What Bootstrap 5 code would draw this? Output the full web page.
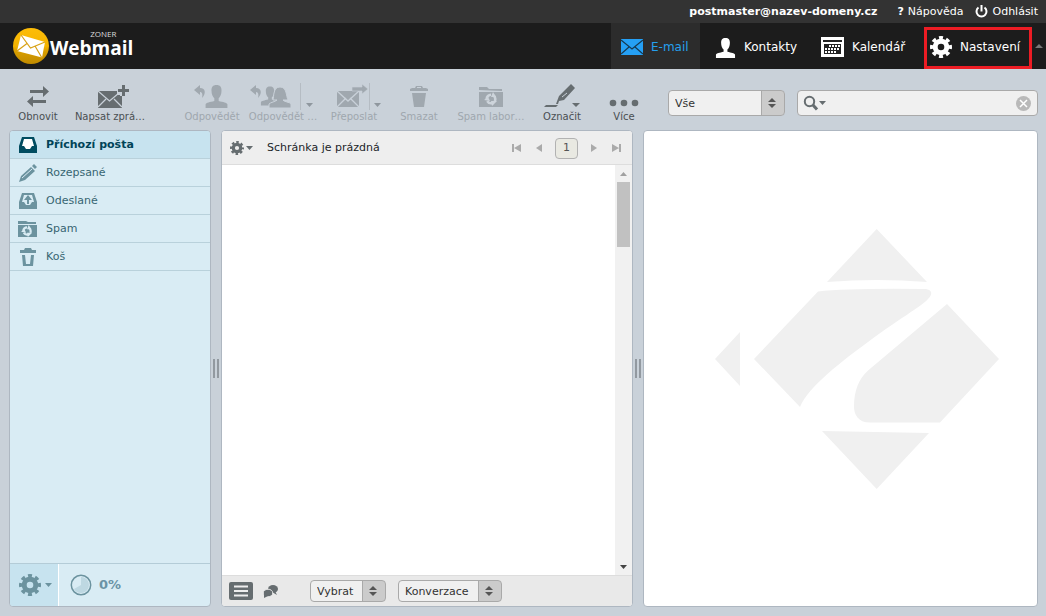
<!DOCTYPE html>
<html lang="cs">
<head>
<meta charset="utf-8">
<meta name="viewport" content="width=device-width, initial-scale=1">
<title>Zoner Webmail</title>
<link rel="stylesheet" href="https://cdn.jsdelivr.net/npm/bootstrap@5.3.0/dist/css/bootstrap.min.css">
<style>
body{font:11px/14px "DejaVu Sans",Verdana,sans-serif;background:#c9d1d9;color:#333}
button{font:inherit;color:inherit;background:none;border:0;padding:0}
a{text-decoration:none;color:#fff}
svg{display:block;flex:none}
.topline{height:23px;background:#333;color:#fff;padding-right:8px;gap:12px}
.mainbar{height:46px;background:#1c1c1c;padding-left:13px}
.brand-main{font:bold 19px/26px "Open Sans",sans-serif;color:#fff;padding-top:4px}
.brand-top{position:absolute;right:17px;top:2px;font:8px/10px "Open Sans",sans-serif;color:#ddd}
.apps a{font-size:12px;gap:8px;padding-top:2px}
.apps .app-mail{width:89px;padding-left:10px;background:#2c2c2c;color:#25a0ee}
.app-people{width:110px;padding-left:15px}
.app-cal{width:114px;padding-left:11px}
.apps .app-set{width:108px;padding:0 0 2px 3px;border:3px solid #ed1c24;margin-top:4px}
.app-more{width:14px;padding-left:3px}
.tools{padding:13px 8px 7px 9px}
.tool{font-size:10px;line-height:12px;color:#4a4f52;text-align:center;flex:none}
.tool svg{fill:#666d70;margin:0 auto 1px}
.tool:disabled{color:#9fa7ae}
.tool:disabled svg{fill:#a0a8af}
.pick{appearance:none;font-size:11px;line-height:14px;color:#333;border:1px solid #a9a9a9;border-radius:4px;padding:1px 24px 0 6px;
background:url("data:image/svg+xml,%3Csvg xmlns='http://www.w3.org/2000/svg' width='8' height='10'%3E%3Cpath d='M0 4L4 0 8 4zM0 6h8L4 10z' fill='%23555'/%3E%3C/svg%3E") no-repeat right 8px center,linear-gradient(#a9a9a9,#a9a9a9) no-repeat right 22px top/1px 100%,linear-gradient(#cbcbcb,#cbcbcb) no-repeat right top/22px 100%,#f0f0f0}
.pick-filter{width:117px;height:26px}
.pick-small{height:22px}
.tool-search{margin-top:8px;gap:12px;padding-left:11px}
.finder{height:26px;background:#f0f0f0;border:1px solid #a9a9a9;border-radius:4px;padding:0 6px 0 5px}
.finder input{border:0;background:none;min-width:0;outline:0}
.pane{border:1px solid #aeb7c1;border-radius:4px;overflow:hidden;background:#fff}
.pane-folders{width:202px;background:#d9ecf4;color:#376572}
.pane-list{flex:412 1 0;min-width:0}
.pane-view{flex:395 1 0;min-width:0}
.folder{height:28px;border-bottom:1px solid #b9d1db;padding:1px 0 0 8px;gap:8px;color:#376572}
.folder svg{fill:#6c939f}
.folder.current{background:#c7e3ef;font-weight:bold;color:#004458}
.folder.current svg{fill:#004c60}
.folder-foot{height:43px;border-top:1px solid #b4ccd7}
.gearbox{width:49px;padding-left:9px;background:#c7e3ef;border-right:1px solid #fff;gap:4px;color:#6c939f}
.quota{font-size:13px;font-weight:bold;color:#6b93a5;padding-left:11px;gap:7px}
.splitter{width:10px;gap:2px}
.splitter i{width:2px;height:19px;background:#9299a0}
.list-head{height:34px;background:#eee;border-bottom:1px solid #ddd;padding:1px 10px 0 8px;color:#666d70;gap:14px}
.list-opts{gap:2px}
.list-foot{height:31px;background:#e9e9e9;border-top:1px solid #ddd;padding-left:7px}
.list-picks{gap:12px;padding-left:29px}
.pager{gap:12px;color:#aaa}
.page-now{width:23px;height:21px;border:1px solid #b2b2b2;border-radius:4px;background:#e9e9e2;color:#555}
.rail{width:17px;background:#f1f1f1;padding:6px 2px}
.rail-thumb{width:13px;height:65px;background:#c1c1c1;margin-top:5px}
</style>
</head>
<body class="vh-100 d-flex flex-column overflow-hidden">
<svg width="0" height="0" class="position-absolute">
<symbol id="gear" viewBox="-11 -11 22 22"><g fill="none" stroke="currentColor"><circle r="5.800" stroke-width="5"/><circle r="9" stroke-width="4" pathLength="16" stroke-dasharray="1.100 .9" stroke-dashoffset=".55"/></g></symbol>
<symbol id="down" viewBox="0 0 7 4"><path d="M0 0h7L3.500 4z" fill="currentColor"/></symbol>
<symbol id="recycle" viewBox="-7 -7 14 14"><circle r="4.300" fill="none" stroke="currentColor" stroke-width="2.600" pathLength="12" stroke-dasharray="3 1" stroke-dashoffset="2"/><path d="M2-7l3 5-5 0zM6 2l-5 5-1-5zM-7 1l4-3 2 4z" fill="currentColor"/></symbol>
<symbol id="people" viewBox="0 0 22 22"><path d="M11 1c3.500 0 4.600 2 4.600 5 0 3.500-1.200 6-2.600 7v2.500c4 1 7.500 1.500 8 3V22H1v-3.500c.5-1.500 4-2 8-3V13C7.600 12 6.400 9.500 6.400 6c0-3 1.100-5 4.600-5z"/></symbol>
</svg>
<header>
<div class="topline d-flex align-items-center justify-content-end">
<b class="me-2">postmaster@nazev-domeny.cz</b>
<a href="#" class="d-flex gap-1"><b>?</b>Nápověda</a>
<a href="#" class="d-flex align-items-center gap-1"><svg width="13" height="13" viewBox="0 0 13 13" fill="none" stroke="#fff" stroke-width="2"><path d="M3.500 2.500a5 5 0 1 0 6 0M6.500 0v6.500"/></svg>Odhlásit</a>
</div>
<div class="mainbar d-flex justify-content-between">
<a href="#" class="d-flex align-items-center position-relative align-self-center"><svg width="37" height="38" viewBox="0 0 37 38"><defs><linearGradient id="gold" x2="0" y2="1"><stop stop-color="#fdbd08"/><stop offset=".5" stop-color="#f5b400"/><stop offset=".65" stop-color="#d89d00"/><stop offset="1" stop-color="#c08a00"/></linearGradient></defs><circle cx="18" cy="19" r="18" fill="url(#gold)"/><path d="M8 8l24 7-3 15.500L4 24z" fill="#fff"/><path d="M8 8l9.500 13L32 15M4 24l10-7.500M29 31l-7-12" fill="none" stroke="#d9a215" stroke-width="1.200"/></svg><span class="brand-main">Webmail</span><span class="brand-top">ZONER</span></a>
<nav class="apps d-flex">
<a href="#" class="app-mail d-flex align-items-center"><svg width="22" height="16" viewBox="0 0 22 16"><path d="M0 0h22v16H0z" fill="#25a0f5"/><path d="M0 1l11 9L22 1M0 15l8-7M22 15l-8-7" fill="none" stroke="#16384f" stroke-width="1.200"/></svg>E-mail</a>
<a href="#" class="app-people d-flex align-items-center"><svg width="21" height="21" fill="#fff"><use href="#people"/></svg>Kontakty</a>
<a href="#" class="app-cal d-flex align-items-center"><svg width="23" height="20" viewBox="0 0 23 20"><path d="M0 0h23v20H0z" fill="#fff"/><path d="M2 3h19v2H2zM3 7h17v10H3z" fill="#222"/><path d="M8 9h11M4 12h15M4 15h11" stroke="#fff" stroke-width="2" stroke-dasharray="2 1"/></svg>Kalendář</a>
<a href="#" class="app-set d-flex align-items-center"><svg width="22" height="22"><use href="#gear"/></svg>Nastavení</a>
<button class="app-more" aria-label="Více aplikací"><svg width="8" height="4"><path d="M0 4l4-4 4 4z" fill="#777"/></svg></button>
</nav>
</div>
</header>
<div class="tools d-flex align-items-start">
<button class="tool" style="width:58px"><svg width="40" height="28"><path d="M12 8h13V4l6 5.500-6 5.500v-4H12zM28 18H15v-4l-6 5.500 6 5.500v-4h13z"/></svg>Obnovit</button>
<button class="tool" style="width:86px"><svg width="40" height="28"><path d="M8 9h19v4h3v1h2v12H8z"/><path d="M8 9l11.500 10L29 11M8 25l8-8M32 25l-8-8" fill="none" stroke="#c9d1d9" stroke-width="1.200"/><path d="M32 3h3v4h4v3h-4v4h-3v-4h-4V7h4z"/></svg>Napsat zprá…</button>
<button class="tool ms-4" style="width:70px" disabled><svg width="40" height="28"><use href="#people" x="12" y="2" width="25" height="24"/><path d="M2 8l6-5v3c6 0 6 6 2 10 1-4 0-6-2-6v3z"/></svg>Odpovědět</button>
<button class="tool" style="width:72px" disabled><svg width="72" height="28"><use href="#people" x="13" y="3" width="20" height="21"/><path d="M3 8l6-5v3c6 0 6 6 2 10 1-4 0-6-2-6v3z"/><path d="M22 26v-4c2-2 6-2 8-4h-4c1-4 0-13 7-13s6 9 8 13h-5c1 2 7 2 8 4v4z" stroke="#c9d1d9"/><path d="M53.500 1v27" stroke="#b5bcc3"/><use href="#down" x="59" y="21" width="7" height="4" color="#8f979e"/></svg>Odpovědět …</button>
<button class="tool" style="width:70px" disabled><svg width="70" height="28"><path d="M18 9h22v16H18z"/><path d="M18 9l11 10L40 9M18 25l9-9M40 25l-9-9" fill="none" stroke="#c9d1d9" stroke-width="1.300"/><path d="M33 5h10V2l6 5-6 5V9H33z" stroke="#c9d1d9" stroke-width=".6"/><path d="M50.500 1v27" stroke="#b5bcc3"/><use href="#down" x="55" y="21" width="7" height="4" color="#8f979e"/></svg>Přeposlat</button>
<button class="tool" style="width:60px" disabled><svg width="20" height="28"><path fill-rule="evenodd" d="M1 9V7l2-1h3l1-2h6l1 2h3l2 1v2zM8 6h4V5H8zM3 11h14l-2 14H5z"/></svg>Smazat</button>
<button class="tool" style="width:84px" disabled><svg width="26" height="28"><path d="M1 8V5h8l2 2h13v2zM1 10h24v15H1z"/><use href="#recycle" x="6" y="10" width="14" height="14" color="#cdd4db"/></svg>Spam labor…</button>
<button class="tool" style="width:58px"><svg width="40" height="28"><path d="M2 25l2-2h12l-2 2zM14 22l3-8L29 2l4 4-11 12-5 1-1 3zM30 21h8l-4 4z"/><path d="M20 15l5-4" stroke="#c9d1d9"/></svg>Označit</button>
<button class="tool" style="width:66px"><svg width="30" height="28"><circle cx="4" cy="21" r="3.300"/><circle cx="15" cy="21" r="3.300"/><circle cx="26" cy="21" r="3.300"/></svg>Více</button>
<div class="tool-search d-flex flex-fill">
<select class="pick pick-filter" aria-label="Filtr"><option>Vše</option></select>
<div class="finder d-flex align-items-center flex-fill">
<button class="d-flex align-items-center" aria-label="Možnosti hledání" style="color:#666d70"><svg width="16" height="16" fill="none" stroke="#666d70"><circle cx="6.500" cy="6.500" r="4.700" stroke-width="2"/><path d="M10 10l4 4.500" stroke-width="3"/></svg><svg width="7" height="4"><use href="#down"/></svg></button>
<input type="search" class="flex-fill" aria-label="Hledat">
<button aria-label="Vymazat"><svg width="15" height="15"><circle cx="7.500" cy="7.500" r="7.500" fill="#b9b9b9"/><path d="M4 4l7 7M11 4l-7 7" stroke="#fff" stroke-width="1.500"/></svg></button>
</div>
</div>
</div>
<main class="d-flex flex-fill" style="padding:0 8px 9px 9px;min-height:0">
<aside class="pane pane-folders d-flex flex-column flex-shrink-0">
<nav class="flex-fill">
<a href="#" class="folder current d-flex align-items-center"><svg width="20" height="18"><path d="M4 1h12l3 9v7H1v-7z"/><path d="M6 3h8l2 7h-2l-2 3H8l-2-3H4z" fill="#fff"/></svg>Příchozí pošta</a>
<a href="#" class="folder d-flex align-items-center"><svg width="20" height="20"><path d="M1 19l2-6L13 4l4 4L7 17zM14 3l2-2 3 3-2 2z"/><path d="M4 15L14 6" stroke="#d9ecf4"/></svg>Rozepsané</a>
<a href="#" class="folder d-flex align-items-center"><svg width="20" height="18"><path fill-rule="evenodd" d="M4 1h12l3 9v7H1v-7zM6 3L4 10h2l2 3h4l2-3h2l-2-7z"/><path d="M10 3l4 5h-3v4H9V8H6z"/></svg>Odeslané</a>
<a href="#" class="folder d-flex align-items-center"><svg width="20" height="18"><path d="M0 4V1h8l2 1h8v2zM0 5h19v12H0z"/><use href="#recycle" x="3" y="5" width="12" height="12" color="#d9ecf4"/></svg>Spam</a>
<a href="#" class="folder d-flex align-items-center"><svg width="20" height="20"><path fill-rule="evenodd" d="M2 6V3h4l1-2h6l1 2h4v3zM4 8h3l1 9h4l1-9h3l-1 11H5z"/></svg>Koš</a>
</nav>
<div class="folder-foot d-flex">
<button class="gearbox d-flex align-items-center" aria-label="Akce složky"><svg width="22" height="22"><use href="#gear"/></svg><svg width="7" height="4"><use href="#down"/></svg></button>
<div class="quota d-flex align-items-center"><svg width="22" height="22"><circle cx="11" cy="11" r="9.700" fill="#d9ecf4" stroke="#6c939f" stroke-width="1.500"/><path d="M11 11V3a8 8 0 1 1-7 12z" fill="#bed8e2"/></svg>0%</div>
</div>
</aside>
<div class="splitter d-flex align-items-center justify-content-center"><i></i><i></i></div>
<section class="pane pane-list d-flex flex-column">
<div class="list-head d-flex align-items-center">
<button class="list-opts d-flex align-items-center" aria-label="Možnosti seznamu"><svg width="14" height="14"><use href="#gear"/></svg><svg width="7" height="4"><use href="#down"/></svg></button>
<span class="text-dark flex-fill">Schránka je prázdná</span>
<div class="pager d-flex align-items-center">
<button aria-label="První"><svg width="10" height="10" fill="#aaa"><path d="M1 1h2v8H1zM10 1v8L3 5z"/></svg></button>
<button aria-label="Předchozí"><svg width="10" height="10" fill="#aaa"><path d="M9 1v8L3 5z"/></svg></button>
<button class="page-now">1</button>
<button aria-label="Další"><svg width="10" height="10" fill="#aaa"><path d="M1 1v8l6-4z"/></svg></button>
<button aria-label="Poslední"><svg width="10" height="10" fill="#aaa"><path d="M0 1v8l7-4zM7 1h2v8H7z"/></svg></button>
</div>
</div>
<div class="flex-fill d-flex justify-content-end">
<div class="rail d-flex flex-column align-items-center"><svg width="7" height="6"><path d="M0 5l3.500-4L7 5z" fill="#a0a0a0"/></svg><div class="rail-thumb"></div><svg class="mt-auto" width="7" height="4" color="#444"><use href="#down"/></svg></div>
</div>
<div class="list-foot d-flex align-items-center">
<button aria-label="Seznam"><svg width="24" height="18"><rect width="24" height="18" rx="2" fill="#666d70"/><path d="M5 4.500h14M5 9h14M5 13.500h14" stroke="#eee" stroke-width="2"/></svg></button>
<button aria-label="Vlákna" class="ms-2"><svg width="20" height="16" fill="#666d70"><ellipse cx="12" cy="6" rx="5" ry="4"/><path d="M14 8l2 4-5-3z"/><ellipse cx="7" cy="10" rx="4.800" ry="3.800" stroke="#e9e9e9"/><path d="M3 11v4l4-2z"/></svg></button>
<div class="list-picks d-flex">
<select class="pick pick-small" style="width:76px" aria-label="Vybrat"><option>Vybrat</option></select>
<select class="pick pick-small" style="width:104px" aria-label="Vlákna"><option>Konverzace</option></select>
</div>
</div>
</section>
<div class="splitter d-flex align-items-center justify-content-center"><i></i><i></i></div>
<section class="pane pane-view d-flex align-items-center justify-content-center">
<svg width="320" height="300" viewBox="680 218 320 300" fill="#f0f0f0"><path d="M827 281l49.700-53L927 281Q877 277 827 281zM754 358l64-67.500Q850 287 924 288c7 0 10 4 4 10-6 7-32 22-56 40-30 22-64 48-72 68zM947 303l52 55-59 63.500H870c-12 0-16-8-16-16 0-16 5-28 14-36zM822 430l107 2-52.300 56zM715 358l25-27v54z"/></svg>
</section>
</main>
<script src="https://cdn.jsdelivr.net/npm/bootstrap@5.3.0/dist/js/bootstrap.bundle.min.js"></script>
</body>
</html>
